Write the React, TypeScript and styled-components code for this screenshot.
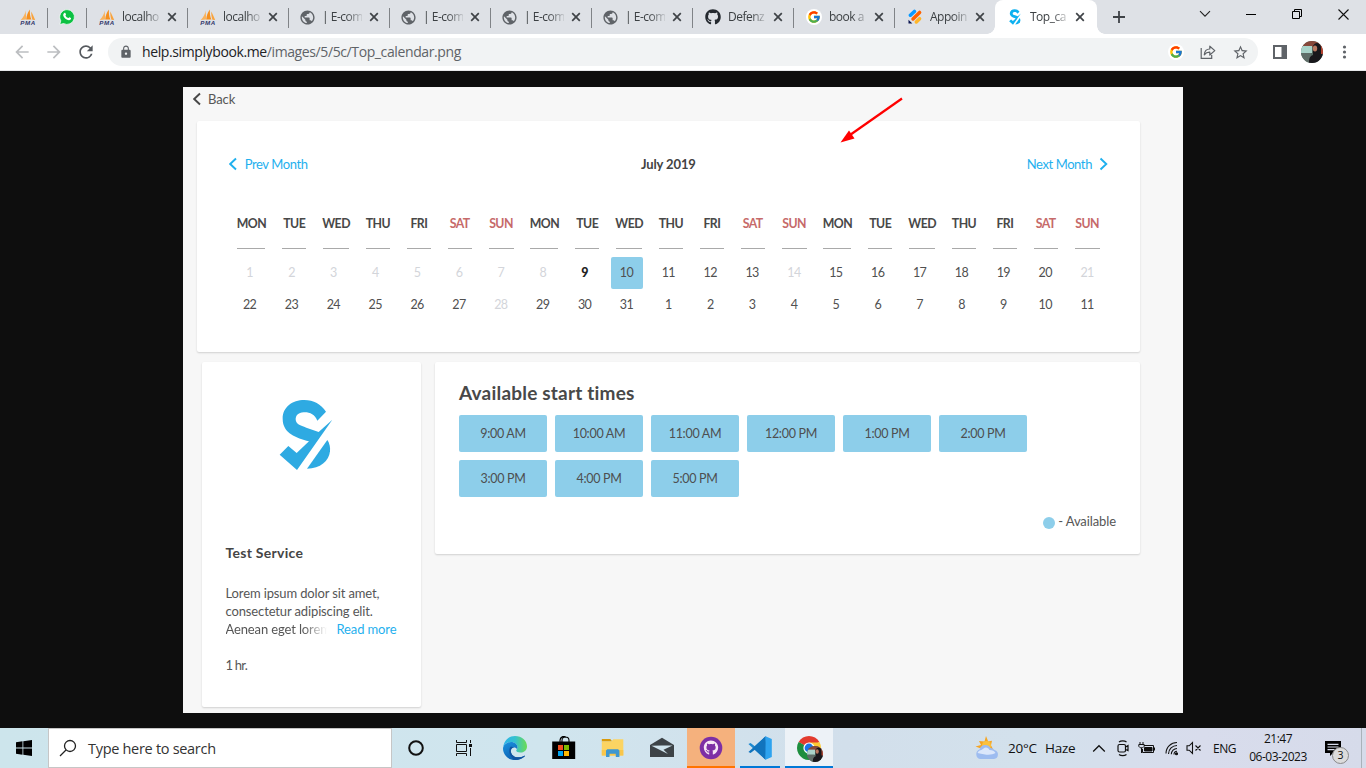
import React from "react";
import styled, { createGlobalStyle, css } from "styled-components";
import { FcGoogle } from "react-icons/fc";
import { FaGithub } from "react-icons/fa";
import { MdPublic, MdLock, MdRefresh, MdArrowBack, MdArrowForward, MdStarBorder } from "react-icons/md";

const uiFont = `"Open Sans", "Noto Sans", sans-serif`;
const pageFont = `Lato, "Open Sans", sans-serif`;

const GlobalStyle = createGlobalStyle`
  * { box-sizing: border-box; }
  body { margin: 0; overflow: hidden; background: #0e0e0e; }
  svg { display: block; flex: none; }
`;

const Screen = styled.div`
  width: 1366px;
  height: 768px;
  display: flex;
  flex-direction: column;
  font-family: ${uiFont};
  white-space: nowrap;
`;

/* ---------- Browser chrome ---------- */

const TabStrip = styled.div`
  height: 34px;
  flex: none;
  display: flex;
  background: #dee1e6;
`;

const PinnedTab = styled.div<{ $width: number; $pad: number }>`
  width: ${(p) => p.$width}px;
  padding-left: ${(p) => p.$pad}px;
  display: flex;
  align-items: center;
  background: linear-gradient(#808387, #808387) right 8px / 1px 20px no-repeat;
`;

const Tab = styled.div<{ $active?: boolean; $last?: boolean; $tight?: boolean }>`
  position: relative;
  width: ${(p) => (p.$last ? 100 : 101)}px;
  flex: none;
  display: grid;
  grid-template-columns: ${(p) => (p.$tight ? "15px 40px 10px" : "17px 38px 10px")};
  column-gap: 7px;
  align-items: center;
  padding-left: 11px;
  ${(p) =>
    !p.$active &&
    !p.$last &&
    css`
      background: linear-gradient(#808387, #808387) right 8px / 1px 20px no-repeat;
    `}
  ${(p) =>
    p.$active &&
    css`
      background: #fff;
      border-radius: 8px 8px 0 0;
      width: 102px;
      &::before,
      &::after {
        content: "";
        position: absolute;
        bottom: 0;
        width: 8px;
        height: 8px;
      }
      &::before {
        left: -8px;
        background: radial-gradient(circle at 0 0, transparent 7.5px, #fff 8px);
      }
      &::after {
        right: -8px;
        background: radial-gradient(circle at 100% 0, transparent 7.5px, #fff 8px);
      }
    `}
`;

const TabIcon = styled.span`
  display: flex;
  justify-content: center;
`;

const TabTitle = styled.span`
  font-size: 12px;
  line-height: 16px;
  letter-spacing: -0.5px;
  color: #3c4043;
  mask-image: linear-gradient(to right, #000 60%, rgba(0, 0, 0, 0.15) 100%);
`;

const NewTab = styled.div`
  width: 44px;
  display: flex;
  align-items: center;
  justify-content: center;
`;

const WindowButtons = styled.div`
  margin-left: auto;
  display: flex;
  height: 28px;
`;

const WindowButton = styled.div`
  width: 46px;
  display: flex;
  align-items: center;
  justify-content: center;
`;

const Toolbar = styled.div`
  height: 37px;
  flex: none;
  display: flex;
  align-items: center;
  padding: 0 12px 0 12px;
  background: #fff;
  border-bottom: 1px solid #e6e8ea;
`;

const NavButton = styled.div<{ $color: string }>`
  width: 32px;
  display: flex;
  align-items: center;
  color: ${(p) => p.$color};
`;

const Omnibox = styled.div`
  width: 1150px;
  height: 28px;
  border-radius: 14px;
  display: flex;
  align-items: center;
  padding: 0 9px 0 11px;
  background: #f1f3f4;
`;

const Url = styled.span`
  margin-left: 9px;
  font-size: 14px;
  line-height: 20px;
  letter-spacing: -0.39px;
  color: #5f6368;
  b {
    font-weight: 400;
    color: #202124;
  }
`;

const OmniActions = styled.div`
  margin-left: auto;
  display: flex;
  gap: 16px;
  align-items: center;
`;

const GoogleBadge = styled.span<{ $size: number }>`
  width: ${(p) => p.$size}px;
  height: ${(p) => p.$size}px;
  border-radius: 50%;
  background: #fff;
  display: flex;
  align-items: center;
  justify-content: center;
`;

const BrowserActions = styled.div`
  display: flex;
  align-items: center;
  gap: 14px;
  margin-left: 15px;
`;

/* ---------- Viewer and booking page ---------- */

const Viewer = styled.main`
  height: 657px;
  flex: none;
  display: flex;
  justify-content: center;
  align-items: center;
  padding-top: 1px;
  background: #0e0e0e;
`;

const BookingPage = styled.div`
  position: relative;
  width: 1000px;
  height: 626px;
  background: #f7f7f7;
  font-family: ${pageFont};
  font-variant-ligatures: none;
  color: #565656;
  overflow: hidden;
  font-size: 13px;
  letter-spacing: -0.1px;
`;

const BackLink = styled.div`
  height: 34px;
  display: flex;
  align-items: center;
  gap: 6.5px;
  padding: 0 0 10px 9.5px;
  line-height: 16px;
`;

const Card = styled.section`
  background: #fff;
  border-radius: 2px;
  box-shadow: 0 1px 2px rgba(0, 0, 0, 0.16);
`;

const CalendarCard = styled(Card)`
  width: 943px;
  height: 231px;
  margin-left: 14px;
  padding: 35px 32px 0 31.7px;
`;

const MonthNav = styled.div`
  display: grid;
  grid-template-columns: 1fr auto 1fr;
  align-items: center;
  height: 16px;
`;

const MonthLink = styled.span<{ $end?: boolean }>`
  display: flex;
  align-items: center;
  gap: 7px;
  justify-content: ${(p) => (p.$end ? "flex-end" : "flex-start")};
  color: #1fb0ee;
  line-height: 16px;
  font-size: 13px;
  letter-spacing: -0.4px;
`;

const MonthTitle = styled.b`
  font-size: 13px;
  line-height: 16px;
  color: #434343;
`;

const WeekHeader = styled.div`
  display: flex;
  gap: 16.87px;
  margin: 44px 0 0 8.7px;
`;

const WeekDay = styled.span<{ $width: number; $weekend: boolean }>`
  flex: none;
  width: ${(p) => p.$width}px;
  height: 33px;
  display: flex;
  justify-content: center;
  border-bottom: 1px solid #a9a9a9;
  font-weight: 700;
  font-size: 12.3px;
  letter-spacing: -0.55px;
  line-height: 16px;
  color: ${(p) => (p.$weekend ? "#c66a6a" : "#484848")};
`;

const DayGrid = styled.div`
  display: grid;
  grid-template-columns: repeat(21, 41.88px);
  grid-auto-rows: 31.6px;
  justify-items: center;
  margin-top: 8px;
`;

type DayState = "off" | "today" | "selected" | "open";

const Day = styled.span<{ $state: DayState }>`
  width: 32px;
  display: flex;
  align-items: center;
  justify-content: center;
  border-radius: 2px;
  font-size: 12.5px;
  letter-spacing: -0.5px;
  font-weight: ${(p) => (p.$state === "today" ? 900 : 400)};
  color: ${(p) => (p.$state === "off" ? "#d3d5da" : p.$state === "today" ? "#222" : "#505050")};
  background: ${(p) => (p.$state === "selected" ? "#8dceea" : "none")};
`;

const LowerRow = styled.div`
  display: flex;
  align-items: flex-start;
  gap: 14px;
  margin: 10px 0 0 19px;
`;

const ServiceCard = styled(Card)`
  width: 219px;
  height: 345px;
  padding: 37px 23px 0 23.5px;
`;

const LogoBox = styled.div`
  height: 146px;
  padding-left: 53px;
`;

const ServiceName = styled.h3`
  margin: 0;
  font-size: 14px;
  letter-spacing: 0.28px;
  line-height: 16px;
  color: #454545;
`;

const Description = styled.div`
  margin-top: 23px;
  line-height: 18.2px;
  letter-spacing: -0.13px;
`;

const LastLine = styled.div`
  display: flex;
  gap: 10px;
`;

const Faded = styled.span`
  width: 101px;
  overflow: hidden;
  mask-image: linear-gradient(to right, #000 76%, transparent 100%);
`;

const ReadMore = styled.span`
  color: #1fb0ee;
`;

const Duration = styled.div`
  margin-top: 18px;
  line-height: 16px;
  letter-spacing: -0.8px;
`;

const TimesCard = styled(Card)`
  width: 705px;
  height: 192px;
  padding: 19px 24px 0 24px;
`;

const TimesTitle = styled.h2`
  margin: 0;
  font-size: 19px;
  letter-spacing: 0.2px;
  line-height: 24px;
  color: #484848;
`;

const Slots = styled.div`
  display: grid;
  grid-template-columns: repeat(6, 88px);
  grid-auto-rows: 37px;
  gap: 8px;
  margin-top: 10px;
`;

const Slot = styled.button`
  border: 0;
  padding: 0 0 1px;
  border-radius: 2px;
  background: #8dceea;
  color: #4d4f50;
  font: 12.5px ${pageFont};
  letter-spacing: -0.3px;
`;

const Legend = styled.div`
  display: flex;
  justify-content: flex-end;
  align-items: center;
  gap: 3px;
  margin-top: 15px;
  line-height: 18px;
`;

const LegendDot = styled.i`
  width: 12px;
  height: 12px;
  margin-top: 3px;
  border-radius: 50%;
  background: #8dceea;
`;

const ArrowOverlay = styled.svg`
  position: absolute;
  left: 655px;
  top: 8px;
`;

/* ---------- Taskbar ---------- */

const Taskbar = styled.footer`
  height: 40px;
  flex: none;
  display: flex;
  background: linear-gradient(to right, #cde5ec 0, #d0e5ee 40%, #d2dfeb 62%, #d3e1ec 75%, #d8dcec 88%, #d6dbea 100%);
  color: #111;
`;

const StartButton = styled.div`
  width: 48px;
  display: flex;
  align-items: center;
  justify-content: center;
`;

const SearchBox = styled.div`
  width: 344px;
  display: flex;
  align-items: center;
  gap: 11px;
  padding-left: 10px;
  background: #fff;
  border: 1px solid #c6c6c6;
  font-size: 14.5px;
  letter-spacing: -0.3px;
  color: #333;
`;

const TaskButton = styled.div<{ $bg?: string; $bar?: string; $barInset?: number; $gap?: number }>`
  width: 48px;
  margin-left: ${(p) => p.$gap ?? 1}px;
  display: flex;
  align-items: center;
  justify-content: center;
  background: ${(p) =>
      p.$bar
        ? `linear-gradient(${p.$bar}, ${p.$bar}) center bottom / ${48 - 2 * (p.$barInset ?? 0)}px 2px no-repeat,`
        : ""}
    ${(p) => p.$bg ?? "transparent"};
`;

const Tray = styled.div`
  margin-left: auto;
  width: 392px;
  display: flex;
  align-items: center;
  font-size: 13.5px;
`;

const Weather = styled.div`
  width: 113px;
  display: flex;
  align-items: center;
  gap: 8px;
  letter-spacing: -0.2px;
`;

const TrayIcons = styled.div`
  width: 126px;
  display: flex;
  align-items: center;
  gap: 8px;
  padding-left: 5px;
`;

const Language = styled.span`
  width: 30px;
  font-size: 12px;
  letter-spacing: -0.5px;
`;

const Clock = styled.div`
  width: 70px;
  text-align: center;
  font-size: 12px;
  line-height: 18px;
  letter-spacing: -0.5px;
`;

const Notifications = styled.div`
  position: relative;
  width: 16px;
  margin-left: 12px;
`;

const Count = styled.span`
  position: absolute;
  left: 7px;
  top: 6px;
  width: 17px;
  height: 17px;
  border: 1px solid #8a8a8a;
  border-radius: 50%;
  background: #dcdcdc;
  text-align: center;
  font-size: 10.5px;
  line-height: 15px;
`;

const ShowDesktop = styled.div`
  margin-left: auto;
  width: 5px;
  height: 40px;
  border-left: 1px solid #a9b2ba;
`;

/* ---------- Icons ---------- */

const PmaIcon = () => (
  <svg width="16" height="16" viewBox="0 0 16 16">
    <path d="M5.800 1.500C5 5 3.600 8.300 .8 11C2.800 10.500 5 10.300 7 10.400C6 7.500 5.600 4.500 5.800 1.500Z" fill="#f9b25c" />
    <path d="M10 .4C7.300 3.600 6.400 7 6.600 10.500L11.400 10.600C10 7.400 9.600 4 10 .4Z" fill="#f58f1d" />
    <path d="M11.300 2.500C11.100 5.300 11.600 8 12.400 10.700L15.200 11C14 8 12.700 5.300 11.300 2.500Z" fill="#f9a33c" />
    <text x="0.300" y="15.800" fontFamily="Liberation Sans, sans-serif" fontSize="6.200" fontWeight="700" fontStyle="italic" textLength="15" fill="#33386b">
      PMA
    </text>
  </svg>
);

const CloseIcon = () => (
  <svg width="10" height="10" viewBox="0 0 10 10">
    <path d="M1.200 1.200l7.600 7.600M8.800 1.200L1.200 8.800" stroke="#3f4347" strokeWidth="1.700" fill="none" />
  </svg>
);

const WhatsAppIcon = () => (
  <svg width="16" height="16" viewBox="0 0 16 16">
    <path d="M8 .6a7.400 7.400 0 1 1-3.500 13.900L.8 15.500l1-3.700A7.400 7.400 0 0 1 8 .6Z" fill="#0cc143" stroke="#fff" strokeWidth="0.700" />
    <path d="M5.300 4c.8-.6 1.200 0 1.700 1.400.1.500-.7.9-.5 1.300.6 1.100 1.500 1.900 2.700 2.400.5.100.8-1 1.300-.8 1.500.6 1.900 1 1.300 1.900-.9 1.300-2.500 1.100-4.100.3C5.800 9.500 4.800 8.200 4.300 6.700c-.3-1.100.1-2.100 1-2.700Z" fill="#fff" />
  </svg>
);

const JotformIcon = () => (
  <svg width="16" height="16" viewBox="0 0 16 16" strokeLinecap="round" strokeWidth="3.500">
    <path d="M3.400 6.200L7.400 2.400" stroke="#0a99ff" />
    <path d="M6 9.900l6.600-6.500" stroke="#ff6100" />
    <path d="M9.300 13l3.300-3.300" stroke="#ffb629" />
    <path d="M1.500 10.800v3.700h3.800Z" fill="#0a1551" stroke="none" />
  </svg>
);

const BrandMark = ({ width, height, color }: { width: number; height: number; color: string }) => (
  <svg width={width} height={height} viewBox="288 176 162 216" fill={color}>
    <path d="M429 214L403 241C395 222 380 215 362 216C345 217 338 226 338 237C338 251 352 256 370 262L407 275L448 238L342 389L290 343L316 317L341 338L378 303C340 292 299 280 299 235C299 200 328 179 364 179C392 179 414 192 429 214Z" />
    <path d="M433 299C440 308 442 322 441 333C438 362 412 385 372 385Z" />
  </svg>
);

const Chevron = ({ right, color }: { right?: boolean; color: string }) => (
  <svg width="9" height="14" viewBox="0 0 9 14">
    <path d={right ? "M1.500 1.500L7.300 7L1.500 12.500" : "M7 1.500L1.200 7L7 12.500"} stroke={color} strokeWidth="1.900" fill="none" />
  </svg>
);

const Portrait = ({ size }: { size: number }) => (
  <svg width={size} height={size} viewBox="0 0 22 22">
    <defs>
      <clipPath id={`face${size}`}>
        <circle cx="11" cy="11" r="11" />
      </clipPath>
    </defs>
    <g clipPath={`url(#face${size})`}>
      <rect width="22" height="22" fill="#51675f" />
      <rect width="22" height="6" fill="#87483a" />
      <rect y="5" width="11" height="7" fill="#a9d3c9" />
      <rect y="12" width="10" height="10" fill="#5f6d68" />
      <path d="M12 5c2-4 7-4 8 1l2 8v8H8c0-5 1-7 4-8Z" fill="#18171b" />
      <ellipse cx="14" cy="7.500" rx="2.200" ry="3" fill="#b97860" />
      <path d="M20 4h2v9h-2z" fill="#b5422f" />
    </g>
  </svg>
);

const ShareIcon = () => (
  <svg width="16" height="16" viewBox="0 0 16 16" fill="none" stroke="#5f6368" strokeWidth="1.200">
    <path d="M1.200 4v10.300h10.500V11" />
    <path d="M4.300 10.800C4.600 7 6.700 5 9.800 5V2.200L14.800 6.600L9.800 11V8.200C7.500 8.100 5.700 9 4.300 10.800Z" strokeLinejoin="round" />
  </svg>
);

const EdgeIcon = () => (
  <svg width="24" height="24" viewBox="0 0 24 24">
    <defs>
      <linearGradient id="edgeTop" x1="0" y1="0.500" x2="1" y2="0.500">
        <stop offset="0" stopColor="#2bb3ea" />
        <stop offset="0.500" stopColor="#35c1cf" />
        <stop offset="1" stopColor="#6cdc52" />
      </linearGradient>
      <linearGradient id="edgeLow" x1="0" y1="0" x2="0.600" y2="1">
        <stop offset="0" stopColor="#1a93e0" />
        <stop offset="1" stopColor="#0b5cae" />
      </linearGradient>
    </defs>
    <path d="M.3 11C1 4.600 5.800 0 12 0c6.800 0 12 4.600 12 10.200 0 4-3 6.300-6.500 6.300-2.700 0-4.300-1-4.300-2 0-.8 1.300-1.200 1.300-3.200C14.500 8.500 11.800 6 8 6 4.500 6 1.500 8 .3 11Z" fill="url(#edgeTop)" />
    <path d="M0 12.500C.3 9 3.800 6 8 6c3.800 0 6.500 2.500 6.500 5.300 0 .6-.2 1.200-.5 1.700-.5-1-1.600-1.600-2.900-1.600-2 0-3.300 1.600-3.300 3.500 0 3.800 3.500 6.400 7.500 6.400 2.200 0 4.200-.6 6-1.600.4-.2.800.2.500.6C19.600 22.600 16 24 12 24 5.200 24 0 18.800 0 12.500Z" fill="url(#edgeLow)" />
    <path d="M7.800 10.500C5 13.500 5.700 20.500 12 24c4 0 7.600-1.400 9.800-3.700.3-.4-.1-.8-.5-.6-1.800 1-3.800 1.600-6 1.600-4 0-7.500-2.600-7.500-6.400 0-1.900 1.300-3.500 3.300-3.500Z" fill="#1254a1" />
  </svg>
);

const StoreIcon = () => (
  <svg width="24" height="24" viewBox="0 0 24 24">
    <path d="M8 6V4a3.600 3.600 0 0 1 6 -2.600M10 6V4.500a3.500 3.500 0 0 1 7 0V6M8 4.500a4 4 0 0 1 5-3.700" stroke="#000" strokeWidth="1.100" fill="none" />
    <path d="M.2 5.500h23V23H.2Z" />
    <path d="M6 9h5v5H6Z" fill="#f25022" />
    <path d="M12 9h5v5h-5Z" fill="#7fba00" />
    <path d="M6 15h5v5H6Z" fill="#00a4ef" />
    <path d="M12 15h5v5h-5Z" fill="#ffb900" />
  </svg>
);

const FolderIcon = () => (
  <svg width="24" height="24" viewBox="0 0 24 24">
    <path d="M.8 3h8.500l2 2.500H.8Z" fill="#d99a0b" />
    <path d="M.8 5.500h9.500l2-2.300h10V19.500H.8Z" fill="#fcd462" />
    <path d="M.8 14h21.500v5.500H.8Z" fill="#f9c64b" />
    <path d="M5 21v-6.500l1.300-1.300h10.800l1.300 1.300V21h-3.600v-3.300H8.500V21Z" fill="#3e97d0" />
  </svg>
);

const MailIcon = () => (
  <svg width="26" height="22" viewBox="0 0 26 22">
    <path d="M1 8L13 .8L25 8V20H1Z" fill="#3d4347" />
    <path d="M2.500 8.800L13 8.500L23.500 8.500L14.500 12.700L19 17Z" fill="#d0e4ed" />
  </svg>
);

const GithubDesktopIcon = () => (
  <svg width="24" height="24" viewBox="0 0 24 24">
    <circle cx="12" cy="12" r="11.300" fill="#7d2fa5" />
    <g transform="translate(4.800 4.300) scale(0.029)" fill="#f6e6f4">
      <path d="M165.900 397.400c0 2-2.300 3.600-5.200 3.600-3.300.3-5.600-1.300-5.600-3.600zM244.800 8C106.100 8 0 113.300 0 252c0 110.900 69.800 205.800 169.500 239.200 12.800 2.300 17.300-5.600 17.300-12.100 0-6.200-.3-40.400-.3-61.400 0 0-70 15-84.700-29.800 0 0-11.400-29.100-27.800-36.600 0 0-22.900-15.700 1.600-15.400 0 0 24.900 2 38.600 25.800 21.900 38.600 58.600 27.500 72.900 20.900 2.300-16 8.800-27.100 16-33.700-55.900-6.200-112.300-14.300-112.300-110.500 0-27.500 7.600-41.300 23.600-58.900-2.600-6.500-11.100-33.300 2.600-67.900 20.900-6.500 69 27 69 27 20-5.600 41.500-8.500 62.800-8.500s42.800 2.900 62.800 8.500c0 0 48.100-33.600 69-27 13.700 34.700 5.200 61.400 2.600 67.900 16 17.700 25.800 31.500 25.800 58.900 0 96.500-58.900 104.200-114.800 110.500 9.200 7.900 17 22.900 17 46.400 0 33.700-.3 75.400-.3 83.600 0 6.500 4.600 14.400 17.300 12.100C428.200 457.800 496 362.900 496 252 496 113.300 383.500 8 244.800 8z" />
    </g>
  </svg>
);

const VsCodeIcon = () => (
  <svg width="24" height="24" viewBox="0 0 24 24">
    <path d="M17.500.3L6.800 10.200L2.600 7L.4 8L17.600 23.700L18 17Z" fill="#1f8ad0" />
    <path d="M17.500 23.700L6.800 13.800L2.600 17L.4 16L17.600.3L18 7Z" fill="#1174bd" />
    <path d="M17.500.2L23.800 3v18l-6.300 2.800V17.300l.1-10.600Z" fill="#2ea3ef" />
  </svg>
);

const ChromeIcon = () => (
  <svg width="24" height="24" viewBox="0 0 24 24">
    <path d="M12 12L1.610 6A12 12 0 0 1 22.390 6Z" fill="#e33b2e" />
    <path d="M12 12L22.390 6A12 12 0 0 1 12 24Z" fill="#fcc934" />
    <path d="M12 12V24A12 12 0 0 1 1.610 6Z" fill="#1e8e3e" />
    <path d="M12 6.500H22.600L17 15Z" fill="#fcc934" />
    <path d="M2 6.500L7.500 15L12 12Z" fill="#1e8e3e" />
    <circle cx="12" cy="12" r="5.600" fill="#fff" />
    <circle cx="12" cy="12" r="4.400" fill="#1a73e8" />
  </svg>
);

const ChromeStack = styled.div`
  position: relative;
`;

const ProfileBadge = styled.span`
  position: absolute;
  left: 10px;
  top: 10px;
`;

const WeatherIcon = () => (
  <svg width="26" height="26" viewBox="0 0 26 26">
    <path d="M12 1l2.200 5.500 3.800-.8-1 4.500 2 4H9L1.500 11.500l5.500-1.500-2-4L10.500 6.500Z" fill="#f5a524" />
    <circle cx="12.500" cy="10.500" r="4.500" fill="#fbc13e" />
    <path d="M6 24a5 5 0 0 1-.5-9.500 6 6 0 0 1 11-1.500 5 5 0 0 1 4 2 4.600 4.600 0 0 1-.5 9Z" fill="#9dbcf0" />
    <path d="M3.500 18c1.500-3.500 4.500-2.500 6-4.500 2-2 5-1 6 1.500 3 0 5 1 6 3-4 1.500-6 3-18 0Z" fill="#dbe7fb" />
  </svg>
);

const TrayGlyphs = () => (
  <>
    <svg width="14" height="9" viewBox="0 0 14 9" fill="none" stroke="#111" strokeWidth="1.300">
      <path d="M1.200 7.500L7 1.700L12.800 7.500" />
    </svg>
    <svg width="16" height="18" viewBox="0 0 16 18" fill="none" stroke="#111" strokeWidth="1.200">
      <rect x="4" y="5.500" width="7.500" height="7.500" rx="1.500" />
      <path d="M11.500 8l2.500-1.500v5L11.500 10.500M5 3c2-1.600 5.500-1.600 7.500 0M5 15.500c2 1.600 5.500 1.600 7.500 0" />
    </svg>
    <svg width="17" height="16" viewBox="0 0 17 16" fill="none" stroke="#111">
      <path d="M6 5.500h9.500v7H4.500V9M16.500 7.500v3M2 2v2.500M5 2v2.500M.8 4.500h5.400v1.800L4.700 7.800H2.300L.8 6.300ZM3.500 8v5" />
      <path d="M6.500 7.500h7.500v3.500h-7.500Z" fill="#111" />
    </svg>
    <svg width="15" height="16" viewBox="-1.500 0 15 16" fill="none" stroke="#111" strokeWidth="1.100">
      <path d="M1.500 13.500C1.500 7 6.500 2.500 12.500 2.500M4 14C4 9 8 5.500 12.500 5.500M6.800 14.300C6.800 11 9.500 8.500 12.500 8.500" />
      <path d="M9.500 14.500C9.500 12.500 11 11.200 12.500 11.200" />
      <circle cx="12" cy="13.800" r="1" fill="#111" />
    </svg>
    <svg width="16" height="14" viewBox="0 0 16 14" fill="none" stroke="#111" strokeWidth="1.100">
      <path d="M1 4.800h2.200L6.500 1.500v11L3.200 9.200H1ZM9.500 4.500l5 5M14.500 4.500l-5 5" />
    </svg>
  </>
);

/* ---------- Data ---------- */

const tabs: { title: string; icon: React.ReactNode; active?: boolean; last?: boolean; tight?: boolean }[] = [
  { title: "localho", icon: <PmaIcon /> },
  { title: "localho", icon: <PmaIcon /> },
  ...Array.from({ length: 4 }, () => ({ title: "| E-com", tight: true, icon: <MdPublic size={17} color="#5f6368" /> })),
  { title: "Defenz", icon: <FaGithub size={16} color="#24292f" /> },
  {
    title: "book a",
    icon: (
      <GoogleBadge $size={16}>
        <FcGoogle size={14} />
      </GoogleBadge>
    ),
  },
  { title: "Appoin", icon: <JotformIcon />, last: true },
  { title: "Top_ca", icon: <BrandMark width={12} height={16} color="#0db1f0" />, active: true },
];

const weekDays: [string, number][] = [
  ["MON", 28],
  ["TUE", 24],
  ["WED", 26],
  ["THU", 24],
  ["FRI", 24],
  ["SAT", 24],
  ["SUN", 25],
];

const days = Array.from({ length: 42 }, (_, i) => {
  const n = i < 31 ? i + 1 : i - 30;
  let state: DayState = "open";
  if (i < 8 || i === 13 || i === 20 || i === 27) state = "off";
  if (i === 8) state = "today";
  if (i === 9) state = "selected";
  return { n, state };
});

const times = ["9:00 AM", "10:00 AM", "11:00 AM", "12:00 PM", "1:00 PM", "2:00 PM", "3:00 PM", "4:00 PM", "5:00 PM"];

export default function App() {
  return (
    <Screen>
      <GlobalStyle />
      <TabStrip>
        <PinnedTab $width={48} $pad={20}>
          <PmaIcon />
        </PinnedTab>
        <PinnedTab $width={39} $pad={11}>
          <WhatsAppIcon />
        </PinnedTab>
        {tabs.map((t, i) => (
          <Tab key={i} $active={t.active} $last={t.last} $tight={t.tight}>
            <TabIcon>{t.icon}</TabIcon>
            <TabTitle>{t.title}</TabTitle>
            <CloseIcon />
          </Tab>
        ))}
        <NewTab>
          <svg width="12" height="12" viewBox="0 0 12 12">
            <path d="M6 0v12M0 6h12" stroke="#3f4347" strokeWidth="1.800" />
          </svg>
        </NewTab>
        <WindowButtons>
          <WindowButton>
            <svg width="12" height="8" viewBox="0 0 12 8" fill="none" stroke="#222" strokeWidth="1.100">
              <path d="M1 1.200L6 6.200L11 1.200" />
            </svg>
          </WindowButton>
          <WindowButton>
            <svg width="10" height="10" viewBox="0 0 10 10">
              <path d="M0 5h10v1H0Z" />
            </svg>
          </WindowButton>
          <WindowButton>
            <svg width="10" height="10" viewBox="0 0 10 10" fill="none" stroke="#000">
              <path d="M.5 2.500h7v7h-7ZM2.500 2.500v-2h7v7h-2" />
            </svg>
          </WindowButton>
          <WindowButton>
            <svg width="11" height="11" viewBox="0 0 11 11" stroke="#111" strokeWidth="1.100">
              <path d="M.5.5l10 10M10.500.5l-10 10" />
            </svg>
          </WindowButton>
        </WindowButtons>
      </TabStrip>

      <Toolbar>
        <NavButton $color="#bcbec1">
          <MdArrowBack size={20} />
        </NavButton>
        <NavButton $color="#bcbec1">
          <MdArrowForward size={20} />
        </NavButton>
        <NavButton $color="#55595e">
          <MdRefresh size={20} />
        </NavButton>
        <Omnibox>
          <MdLock size={14} color="#5f6368" />
          <Url>
            <b>help.simplybook.me</b>/images/5/5c/Top_calendar.png
          </Url>
          <OmniActions>
            <GoogleBadge $size={16}>
              <FcGoogle size={14} />
            </GoogleBadge>
            <ShareIcon />
            <MdStarBorder size={17} color="#5f6368" />
          </OmniActions>
        </Omnibox>
        <BrowserActions>
          <svg width="14" height="14" viewBox="0 0 14 14">
            <path d="M0 0h14v14H0ZM2 2v10h6.500V2Z" fill="#5f6368" fillRule="evenodd" />
          </svg>
          <Portrait size={22} />
          <svg width="16" height="14" viewBox="0 0 16 14" fill="#5f6368">
            <circle cx="7.500" cy="2" r="1.600" />
            <circle cx="7.500" cy="7" r="1.600" />
            <circle cx="7.500" cy="12" r="1.600" />
          </svg>
        </BrowserActions>
      </Toolbar>

      <Viewer>
        <BookingPage>
          <BackLink>
            <Chevron color="#484848" />
            Back
          </BackLink>
          <CalendarCard>
            <MonthNav>
              <MonthLink>
                <Chevron color="#1fb0ee" />
                Prev Month
              </MonthLink>
              <MonthTitle>July 2019</MonthTitle>
              <MonthLink $end>
                Next Month
                <Chevron right color="#1fb0ee" />
              </MonthLink>
            </MonthNav>
            <WeekHeader>
              {[...weekDays, ...weekDays, ...weekDays].map(([name, width], i) => (
                <WeekDay key={i} $width={width} $weekend={i % 7 > 4}>
                  {name}
                </WeekDay>
              ))}
            </WeekHeader>
            <DayGrid>
              {days.map((d, i) => (
                <Day key={i} $state={d.state}>
                  {d.n}
                </Day>
              ))}
            </DayGrid>
          </CalendarCard>
          <LowerRow>
            <ServiceCard>
              <LogoBox>
                <BrandMark width={54} height={72} color="#2eaae2" />
              </LogoBox>
              <ServiceName>Test Service</ServiceName>
              <Description>
                <div>Lorem ipsum dolor sit amet,</div>
                <div>consectetur adipiscing elit.</div>
                <LastLine>
                  <Faded>Aenean eget lorem</Faded>
                  <ReadMore>Read more</ReadMore>
                </LastLine>
              </Description>
              <Duration>1 hr.</Duration>
            </ServiceCard>
            <TimesCard>
              <TimesTitle>Available start times</TimesTitle>
              <Slots>
                {times.map((t) => (
                  <Slot key={t}>{t}</Slot>
                ))}
              </Slots>
              <Legend>
                <LegendDot />- Available
              </Legend>
            </TimesCard>
          </LowerRow>
          <ArrowOverlay width="68" height="50" viewBox="0 0 68 50">
            <path d="M64 3.500L12 40" stroke="#f00" strokeWidth="2.200" />
            <path d="M2.500 47.500L11 35.500L16.500 43.500Z" fill="#f00" />
          </ArrowOverlay>
        </BookingPage>
      </Viewer>

      <Taskbar>
        <StartButton>
          <svg width="16" height="16" viewBox="0 0 16 16">
            <path d="M0 2.200L6.500 1.300V7.600H0ZM7.300 1.200L16 0V7.600H7.300ZM0 8.400H6.500V14.700L0 13.800ZM7.300 8.400H16V16L7.300 14.800Z" />
          </svg>
        </StartButton>
        <SearchBox>
          <svg width="18" height="18" viewBox="0 0 18 18" fill="none" stroke="#222" strokeWidth="1.300">
            <circle cx="11" cy="7" r="5.500" />
            <path d="M7 11L1 17" />
          </svg>
          Type here to search
        </SearchBox>
        <TaskButton $gap={0}>
          <svg width="16" height="16" viewBox="0 0 16 16">
            <circle cx="8" cy="8" r="6.800" fill="none" stroke="#111" strokeWidth="2" />
          </svg>
        </TaskButton>
        <TaskButton $gap={0}>
          <svg width="16" height="16" viewBox="0 0 16 16" fill="none" stroke="#111">
            <path d="M.5 0v2.500h10V0M.5 16v-2.500h10V16M.5 4.500h10v7H.5ZM14.500 0v3M14.500 8v8" />
            <path d="M13 4h3v3h-3Z" fill="#111" stroke="none" />
          </svg>
        </TaskButton>
        <TaskButton $gap={3}>
          <EdgeIcon />
        </TaskButton>
        <TaskButton>
          <StoreIcon />
        </TaskButton>
        <TaskButton>
          <FolderIcon />
        </TaskButton>
        <TaskButton>
          <MailIcon />
        </TaskButton>
        <TaskButton $bg="#f5b17d" $bar="#ff7300">
          <GithubDesktopIcon />
        </TaskButton>
        <TaskButton $bar="#0078d7" $barInset={4}>
          <VsCodeIcon />
        </TaskButton>
        <TaskButton $bg="#edf2f7" $bar="#0078d7">
          <ChromeStack>
            <ChromeIcon />
            <ProfileBadge>
              <Portrait size={16} />
            </ProfileBadge>
          </ChromeStack>
        </TaskButton>
        <Tray>
          <Weather>
            <WeatherIcon />
            <span>20°C</span>
            <span>Haze</span>
          </Weather>
          <TrayIcons>
            <TrayGlyphs />
          </TrayIcons>
          <Language>ENG</Language>
          <Clock>
            <div>21:47</div>
            <div>06-03-2023</div>
          </Clock>
          <Notifications>
            <svg width="16" height="15" viewBox="0 0 16 15">
              <path d="M0 0h16v12H8l-3 3v-3H0ZM2.500 2.700v1.200h11V2.700ZM2.500 5.400v1.200h11V5.400ZM2.500 8.100v1.200h7V8.100Z" fillRule="evenodd" />
            </svg>
            <Count>3</Count>
          </Notifications>
          <ShowDesktop />
        </Tray>
      </Taskbar>
    </Screen>
  );
}
